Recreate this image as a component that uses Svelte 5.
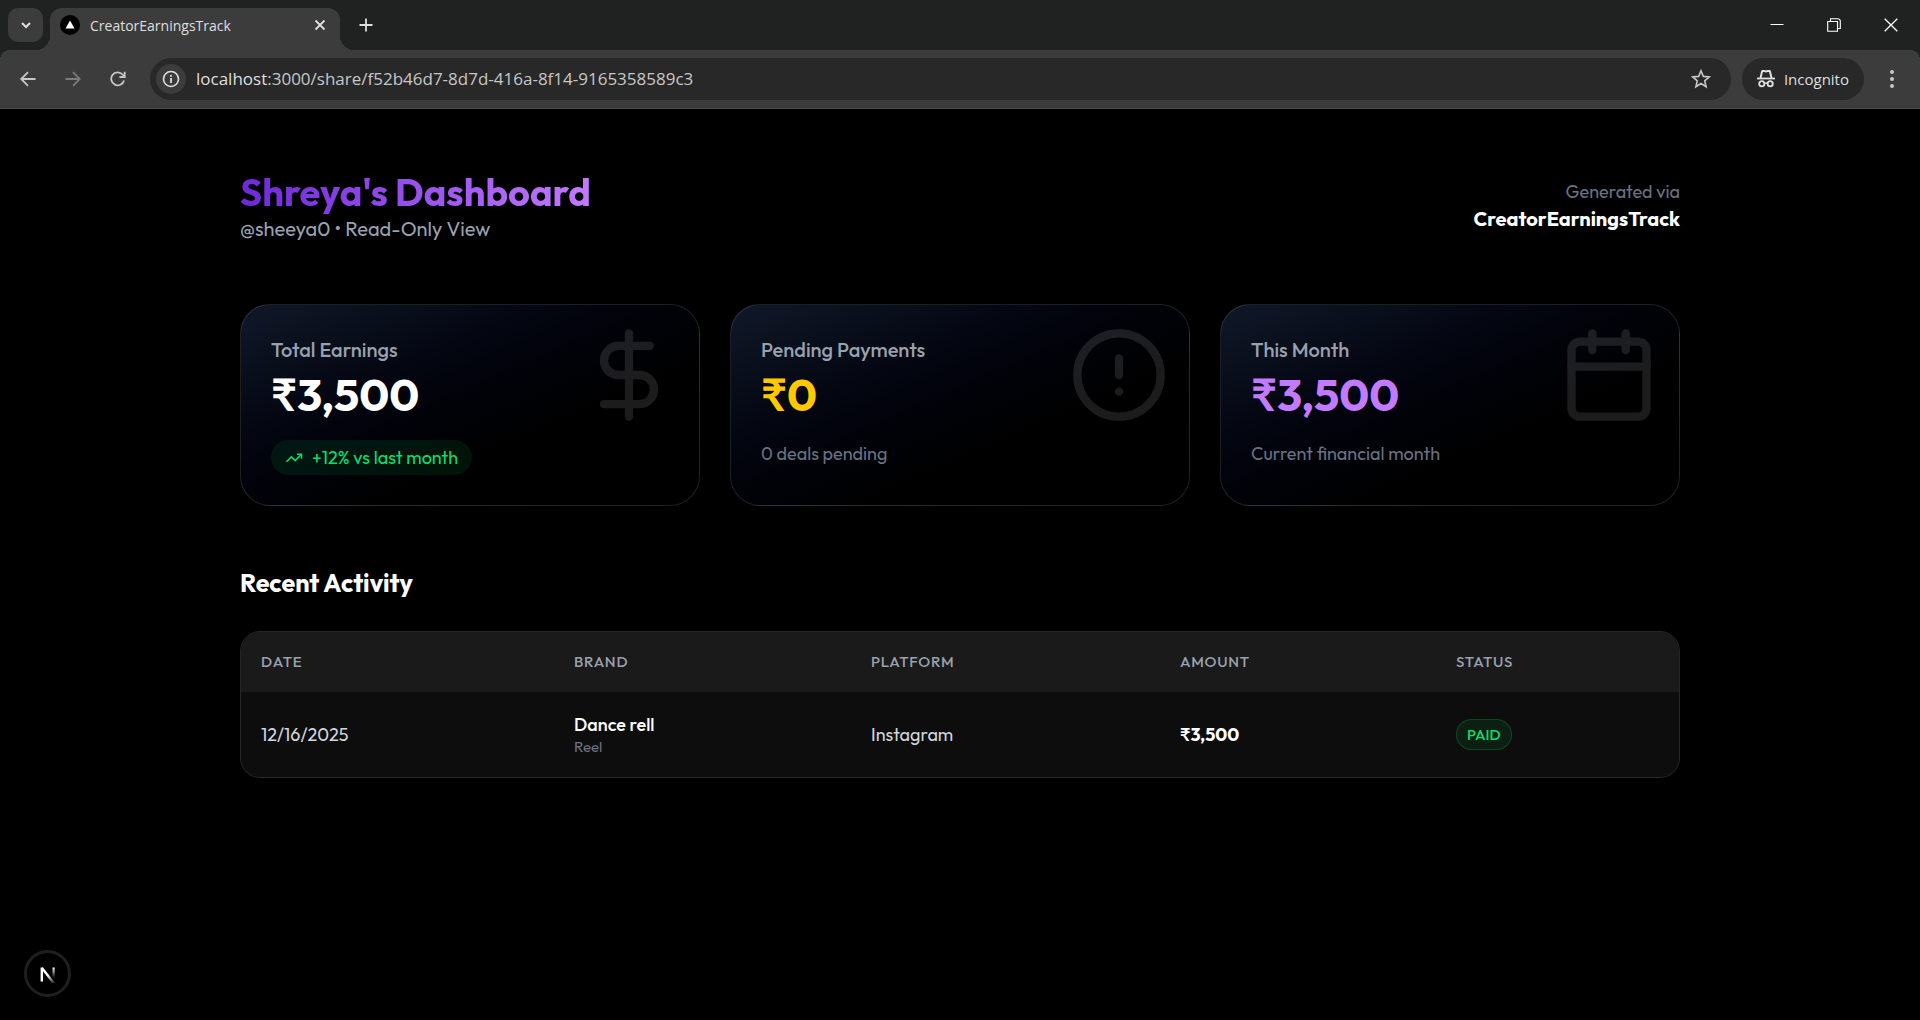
<script>
  const stats = [
    { label: 'Total Earnings', value: '₹3,500', tone: 'white', icon: 'dollar', trend: '+12% vs last month' },
    { label: 'Pending Payments', value: '₹0', tone: 'amber', icon: 'alert', note: '0 deals pending' },
    { label: 'This Month', value: '₹3,500', tone: 'violet', icon: 'calendar', note: 'Current financial month' }
  ];
  const deals = [
    { date: '12/16/2025', brand: 'Dance rell', kind: 'Reel', platform: 'Instagram', amount: '₹3,500', status: 'PAID' }
  ];
  let url = $state(':3000/share/f52b46d7-8d7d-416a-8f14-9165358589c3');
</script>

<div class="window">
  <header class="tabstrip">
    <button class="tab-search" aria-label="Search tabs">
      <svg width="12" height="12" viewBox="0 0 12 12"><path d="M2 4l4 4 4-4" stroke-width="2" /></svg>
    </button>
    <div class="tab">
      <svg class="favicon" width="20" height="20" viewBox="0 0 20 20"><circle cx="10" cy="10" r="10" fill="#000" stroke="none" /><path d="M10 5.500l4.500 8h-9z" fill="#fff" stroke="none" /></svg>
      <span class="tab-title">CreatorEarningsTrack</span>
      <button class="plain" aria-label="Close tab">
        <svg width="12" height="12" viewBox="0 0 12 12"><path d="M1.500 1.500l9 9M10.500 1.500l-9 9" stroke-width="1.800" /></svg>
      </button>
    </div>
    <button class="plain new-tab" aria-label="New tab">
      <svg width="14" height="14" viewBox="0 0 14 14"><path d="M7 .5v13M.5 7h13" stroke-width="1.800" /></svg>
    </button>
    <div class="controls">
      <button class="plain" aria-label="Minimize"><svg width="14" height="14" viewBox="0 0 14 14"><path d="M.5 6.500h13" stroke="#fff" stroke-width="1" /></svg></button>
      <button class="plain" aria-label="Restore"><svg width="14" height="14" viewBox="0 0 14 14"><path d="M.7 3.500h9.800v9.800H.7zM3.500 3V.7h7.300a2.500 2.500 0 0 1 2.500 2.500v7.300h-2.300" stroke="#fff" stroke-width="1.100" /></svg></button>
      <button class="plain" aria-label="Close"><svg width="14" height="14" viewBox="0 0 14 14"><path d="M.7.7l12.600 12.600M13.300.7L.7 13.300" stroke="#fff" stroke-width="1.300" /></svg></button>
    </div>
  </header>

  <nav class="toolbar" aria-label="Browser">
    <button class="plain nav" aria-label="Back"><svg width="16" height="16" viewBox="0 0 16 16"><path d="M15.500 8H1.500M8 1.200L1.200 8 8 14.800" stroke-width="1.800" /></svg></button>
    <button class="plain nav dim" aria-label="Forward"><svg width="16" height="16" viewBox="0 0 16 16"><path d="M.5 8h14M8 1.200L14.800 8 8 14.800" stroke-width="1.800" /></svg></button>
    <button class="plain nav" aria-label="Reload"><svg width="16" height="16" viewBox="0 0 16 16"><path d="M14 9.500A6.500 6.500 0 1 1 12.600 3.500L14.500 5.500M14.700.7v5.300H9.400" stroke-width="1.800" /></svg></button>
    <div class="omnibox">
      <button class="site-info" aria-label="View site information">
        <svg width="18" height="18" viewBox="0 0 18 18"><circle cx="9" cy="9" r="7.500" stroke-width="1.600" /><path d="M9 8v5M9 5v1.800" stroke-width="1.800" /></svg>
      </button>
      <label class="address"><span>localhost</span><input aria-label="Address" bind:value={url} /></label>
      <button class="plain star" aria-label="Bookmark this tab">
        <svg width="20" height="20" viewBox="0 0 20 20"><path d="M10 1.800l2.300 5.600 6 .5-4.600 3.900 1.400 5.900L10 14.500l-5.100 3.200 1.400-5.900L1.700 7.900l6-.5z" stroke-width="1.600" /></svg>
      </button>
    </div>
    <button class="incognito">
      <svg width="18" height="18" viewBox="0 0 18 18"><path d="M0 8.500h18" stroke-width="1.800" /><path d="M3.500 8L5 1.800Q5.300.6 6.400.8L9 1.500l2.600-.7q1.100-.2 1.400 1L14.500 8" stroke-width="2" /><circle cx="4.800" cy="13.800" r="2.600" stroke-width="1.800" /><circle cx="13.200" cy="13.800" r="2.600" stroke-width="1.800" /><path d="M7.300 13.500q1.700-1 3.400 0" stroke-width="1.600" /></svg>
      Incognito
    </button>
    <button class="plain" aria-label="Menu"><svg width="4" height="20" viewBox="0 0 4 20"><g fill="#c7c7c7" stroke="none"><circle cx="2" cy="3" r="2" /><circle cx="2" cy="10" r="2" /><circle cx="2" cy="17" r="2" /></g></svg></button>
  </nav>

  <main>
    <div class="intro">
      <div>
        <h1>Shreya's Dashboard</h1>
        <p class="handle">@sheeya0 • Read-Only View</p>
      </div>
      <div class="source">
        <p>Generated via</p>
        <strong>CreatorEarningsTrack</strong>
      </div>
    </div>

    <section class="stats" aria-label="Summary">
      {#each stats as s}
        <article class="card">
          <svg class="mark" viewBox="0 0 24 24" width="100" height="100" stroke-width="2">
            {#if s.icon === 'dollar'}
              <path d="M12 2v20M17 5H9.500a3.500 3.500 0 0 0 0 7h5a3.500 3.500 0 0 1 0 7H6" />
            {:else if s.icon === 'alert'}
              <circle cx="12" cy="12" r="10" /><path d="M12 8v4M12 16h.01" />
            {:else}
              <path d="M8 2v4M16 2v4M3 10h18" /><rect x="3" y="4" width="18" height="18" rx="2" />
            {/if}
          </svg>
          <h2 class="label">{s.label}</h2>
          <p class="value {s.tone}">{s.value}</p>
          {#if s.trend}
            <p class="trend">
              <svg width="18" height="18" viewBox="0 0 24 24" stroke-width="2"><path d="M16 7h6v6" /><path d="M22 7l-8.500 8.500-5-5L2 17" /></svg>
              {s.trend}
            </p>
          {:else}
            <p class="note">{s.note}</p>
          {/if}
        </article>
      {/each}
    </section>

    <h2 class="section-title">Recent Activity</h2>
    <div class="table-wrap">
      <table>
        <colgroup><col class="c-date" /><col class="c-brand" /><col class="c-platform" /><col class="c-amount" /><col class="c-status" /></colgroup>
        <thead>
          <tr><th>DATE</th><th>BRAND</th><th>PLATFORM</th><th>AMOUNT</th><th>STATUS</th></tr>
        </thead>
        <tbody>
          {#each deals as d}
            <tr>
              <td>{d.date}</td>
              <td><div class="brand">{d.brand}</div><div class="kind">{d.kind}</div></td>
              <td>{d.platform}</td>
              <td class="amount">{d.amount}</td>
              <td><span class="status">{d.status}</span></td>
            </tr>
          {/each}
        </tbody>
      </table>
    </div>
  </main>

  <button class="devtools" aria-label="Open Next.js Dev Tools">
    <svg width="18" height="18" viewBox="0 0 18 18">
      <defs>
        <linearGradient id="diag" gradientUnits="userSpaceOnUse" x1="9" y1="10" x2="16" y2="19"><stop stop-color="#fff" /><stop offset="1" stop-color="#fff" stop-opacity="0" /></linearGradient>
        <linearGradient id="stem" gradientUnits="userSpaceOnUse" x1="0" y1="2" x2="0" y2="13"><stop stop-color="#fff" /><stop offset="1" stop-color="#fff" stop-opacity="0" /></linearGradient>
      </defs>
      <path d="M3 3L15 18.500" stroke="url(#diag)" stroke-width="2.400" />
      <path d="M2.800 16.500V2.500" stroke="#fff" stroke-width="2.400" />
      <path d="M14.600 2.500v11" stroke="url(#stem)" stroke-width="2.200" />
    </svg>
  </button>
</div>

<style>
  :global(body) { background: #000; }
  * { box-sizing: border-box; margin: 0; }
  svg { display: block; flex: none; fill: none; stroke: currentColor; }
  button, input { font: inherit; color: inherit; border: 0; background: none; padding: 0; }

  .window {
    min-height: 100vh;
    background: #000;
    color: #fff;
    font-family: Outfit, Lato, "Noto Sans", sans-serif;
  }

  .tabstrip, .toolbar {
    display: flex;
    align-items: center;
    font-family: "Segoe UI", "Open Sans", "Noto Sans", sans-serif;
    color: #dfdfdf;
  }
  .tabstrip { height: 50px; padding-left: 8px; background: #202221; }
  .tab-search {
    display: grid;
    place-items: center;
    width: 35px;
    height: 34px;
    border-radius: 10px;
    background: #3c3c3c;
  }
  .tab {
    position: relative;
    display: flex;
    align-items: center;
    align-self: flex-end;
    width: 290px;
    height: 42px;
    margin-left: 7px;
    padding: 0 14px 8px 10px;
    border-radius: 12px 12px 0 0;
    background: #3c3c3c;
  }
  .tab::before, .tab::after {
    content: "";
    position: absolute;
    bottom: 0;
    width: 14px;
    height: 14px;
  }
  .tab::before { right: 100%; background: radial-gradient(circle at 0 0, transparent 14px, #3c3c3c 14px); }
  .tab::after { left: 100%; background: radial-gradient(circle at 100% 0, transparent 14px, #3c3c3c 14px); }
  .tab-title { flex: 1; margin-left: 10px; font-size: 14px; }
  .new-tab { margin-left: 19px; }
  .controls { display: flex; gap: 43px; margin-left: auto; padding-right: 22px; }

  .toolbar {
    position: relative;
    height: 59px;
    padding: 0 26px 1px 20px;
    background: #3c3c3c;
    border-bottom: 1px solid #4b4b4b;
  }
  .toolbar::before, .toolbar::after {
    content: "";
    position: absolute;
    top: 0;
    width: 10px;
    height: 10px;
  }
  .toolbar::before { left: 0; background: radial-gradient(circle at 100% 100%, transparent 10px, #202221 10px); }
  .toolbar::after { right: 0; background: radial-gradient(circle at 0 100%, transparent 10px, #202221 10px); }
  .nav { margin-right: 29px; color: #c7c7c7; }
  .nav.dim { color: #7b7b7b; }
  .omnibox {
    display: flex;
    align-items: center;
    flex: 1;
    height: 42px;
    margin-left: -5px;
    padding: 0 20px 0 6px;
    border-radius: 21px;
    background: #282828;
  }
  .star { color: #c7c7c7; }
  .site-info {
    display: grid;
    place-items: center;
    width: 30px;
    height: 30px;
    border-radius: 50%;
    background: #3c3c3c;
  }
  .address { display: flex; flex: 1; margin-left: 10px; font-size: 17px; line-height: 24px; }
  .address input { flex: 1; min-width: 0; color: #c7c7c7; outline: 0; }
  .incognito {
    display: flex;
    align-items: center;
    gap: 9px;
    height: 42px;
    margin: 0 26px 0 11px;
    padding: 0 15px;
    border-radius: 21px;
    background: #282828;
    font-size: 15px;
  }

  main { max-width: 1520px; margin: 0 auto; padding: 60px 40px; }
  .intro { display: flex; justify-content: space-between; align-items: center; }
  h1 {
    width: fit-content;
    font-size: 38px;
    line-height: 46px;
    font-weight: 700;
    background: linear-gradient(90deg, #6d28d9, #c27aff);
    background-clip: text;
    -webkit-background-clip: text;
    color: transparent;
  }
  .handle { font-size: 20px; line-height: 28px; color: #99a1af; }
  .source { padding-bottom: 2px; text-align: right; font-size: 18px; line-height: 27px; color: #6a7282; }
  .source strong { display: block; font-size: 20px; color: #fff; }

  .stats {
    display: grid;
    grid-template-columns: repeat(3, 1fr);
    gap: 30px;
    margin-top: 61px;
  }
  .card {
    position: relative;
    padding: 30px;
    border: 1px solid rgba(255, 255, 255, 0.12);
    border-radius: 30px;
    background: linear-gradient(to bottom right, #101828, #02040e 38%, #000 64%);
  }
  .mark {
    position: absolute;
    top: 20px;
    right: 20px;
    opacity: 0.11;
    stroke-linecap: round;
    stroke-linejoin: round;
  }
  .label { font-size: 20px; line-height: 30px; font-weight: 500; color: #99a1af; }
  .value { font-size: 45px; line-height: 60px; font-weight: 700; }
  .white { color: #fff; }
  .amber { color: #ffc800; }
  .violet { color: #c27aff; }
  .trend {
    display: flex;
    align-items: center;
    gap: 9px;
    width: fit-content;
    margin-top: 15px;
    padding: 4px 14px;
    border-radius: 18px;
    background: rgba(0, 201, 80, 0.1);
    font-size: 18px;
    line-height: 27px;
    color: #05df72;
  }
  .note { margin-top: 15px; font-size: 18px; line-height: 27px; color: #6a7282; }

  .section-title { margin: 61px 0 32px; font-size: 25px; line-height: 32px; font-weight: 700; }
  .table-wrap {
    overflow: hidden;
    border: 1px solid #262626;
    border-radius: 20px;
    background: #0d0d0d;
  }
  table { width: 100%; table-layout: fixed; border-collapse: collapse; }
  .c-date { width: 313px; }
  .c-brand { width: 297px; }
  .c-platform { width: 309px; }
  .c-amount { width: 276px; }
  .c-status { width: 243px; }
  th, td { padding: 20px; text-align: left; vertical-align: middle; }
  th { font-size: 15px; line-height: 20px; font-weight: 500; letter-spacing: 0.05em; color: #99a1af; background: #1a1a1a; }
  td { font-size: 18px; line-height: 25px; color: #d1d5dc; }
  td .brand { font-weight: 500; color: #fff; }
  td .kind { font-size: 15px; line-height: 20px; color: #6a7282; }
  td.amount { font-weight: 700; color: #fff; }
  .status {
    display: inline-block;
    padding: 5px 10px;
    border: 1px solid rgba(0, 201, 80, 0.25);
    border-radius: 16px;
    background: rgba(0, 201, 80, 0.1);
    font-size: 15px;
    line-height: 19px;
    font-weight: 500;
    color: #05df72;
  }

  .devtools {
    position: fixed;
    left: 24px;
    bottom: 23px;
    display: grid;
    place-items: center;
    width: 47px;
    height: 47px;
    border: 3px solid #1f1f1f;
    border-radius: 50%;
    background: #000;
  }
</style>
